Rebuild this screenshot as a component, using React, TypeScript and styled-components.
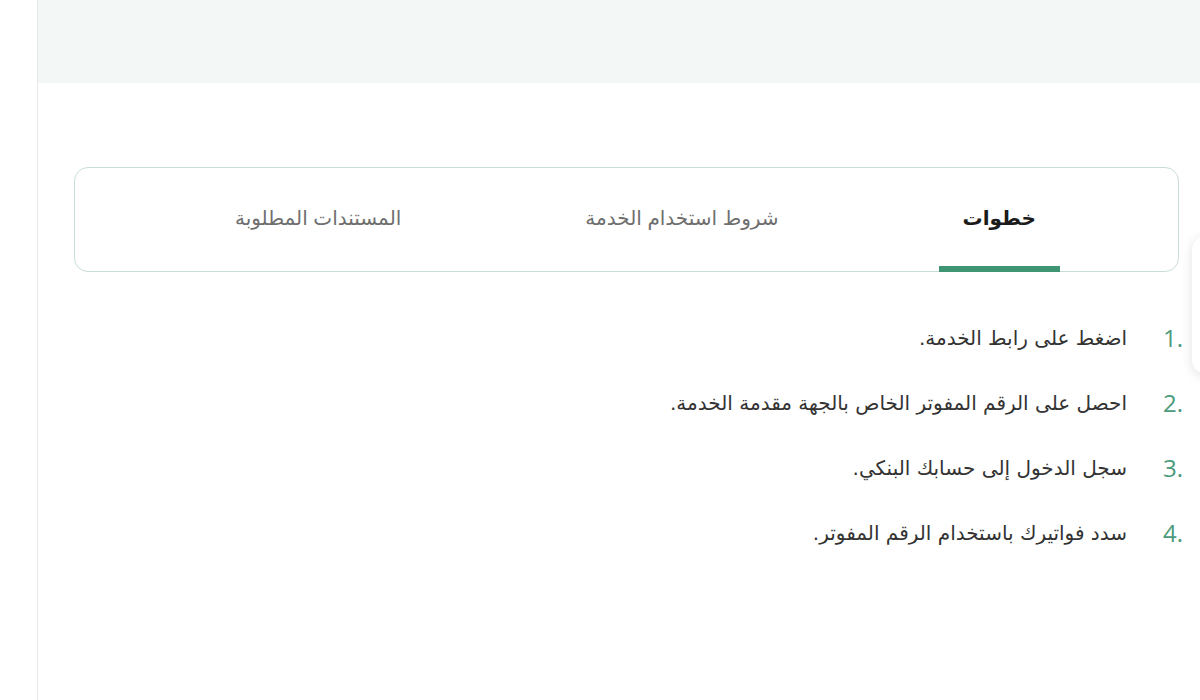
import React, { useState } from "react";
import styled, { createGlobalStyle } from "styled-components";

const Global = createGlobalStyle`
  html, body { margin: 0; padding: 0; background: #ffffff; }
  body { font-family: "Noto Sans", "DejaVu Sans", sans-serif; overflow: hidden; }
  * { box-sizing: border-box; }
`;

const Page = styled.div`
  position: relative;
  width: 1200px;
  height: 700px;
  display: flex;
  background: #ffffff;
  overflow: hidden;
`;

const LeftGutter = styled.div`
  width: 38px;
  flex: none;
  border-right: 1px solid #e6e8e8;
  background: #ffffff;
`;

const Main = styled.main`
  flex: 1;
  display: flex;
  flex-direction: column;
`;

const TopBand = styled.div`
  height: 83px;
  background: #f3f8f6;
`;

const Content = styled.section`
  direction: rtl;
  padding: 84px 21px 0 36px;
  display: flex;
  flex-direction: column;
`;

const TabCard = styled.div`
  height: 105px;
  border: 1px solid #c7ddd5;
  border-radius: 14px;
  display: flex;
  justify-content: flex-start;
  align-items: stretch;
  gap: 136px;
  padding-right: 118px;
  background: #ffffff;
`;

const Tab = styled.button<{ $active?: boolean }>`
  position: relative;
  border: none;
  background: transparent;
  padding: 0 24px 4px;
  font-family: "Liberation Sans", "DejaVu Sans", sans-serif;
  font-size: 20px;
  font-weight: ${(p) => (p.$active ? 700 : 400)};
  color: ${(p) => (p.$active ? "#1b1b1b" : "#6f6f6f")};
  cursor: pointer;
  display: flex;
  align-items: center;
  justify-content: center;
  &::after {
    content: "";
    position: absolute;
    left: 0;
    right: 0;
    bottom: -1px;
    height: 6px;
    background: ${(p) => (p.$active ? "#3f9474" : "transparent")};
  }
`;

const Steps = styled.ol`
  list-style: none;
  margin: 47px -4px 0 0;
  padding: 0;
  display: flex;
  flex-direction: column;
  gap: 27px;
`;

const Step = styled.li`
  display: flex;
  align-items: center;
  gap: 34px;
  font-family: "DejaVu Sans", sans-serif;
  font-size: 20px;
  line-height: 38px;
  color: #333333;
`;

const Num = styled.span`
  font-family: "Open Sans", "Liberation Sans", sans-serif;
  font-size: 24px;
  color: #4b9a7c;
  direction: ltr;
  width: 22px;
  text-align: right;
`;

const SideCard = styled.div`
  position: absolute;
  right: -40px;
  top: 236px;
  width: 48px;
  height: 138px;
  background: #ffffff;
  border-radius: 14px;
  box-shadow: 0 2px 12px rgba(0, 0, 0, 0.12);
`;

const tabs = ["خطوات", "شروط استخدام الخدمة", "المستندات المطلوبة"];
const steps = [
  "اضغط على رابط الخدمة.",
  "احصل على الرقم المفوتر الخاص بالجهة مقدمة الخدمة.",
  "سجل الدخول إلى حسابك البنكي.",
  "سدد فواتيرك باستخدام الرقم المفوتر.",
];

export default function App() {
  const [active, setActive] = useState(0);
  return (
    <>
      <Global />
      <Page>
        <LeftGutter />
        <Main>
          <TopBand />
          <Content>
            <TabCard>
              {tabs.map((t, i) => (
                <Tab key={t} $active={i === active} onClick={() => setActive(i)}>
                  {t}
                </Tab>
              ))}
            </TabCard>
            <Steps>
              {steps.map((s, i) => (
                <Step key={i}>
                  <Num>{i + 1}.</Num>
                  <span>{s}</span>
                </Step>
              ))}
            </Steps>
          </Content>
        </Main>
        <SideCard />
      </Page>
    </>
  );
}
